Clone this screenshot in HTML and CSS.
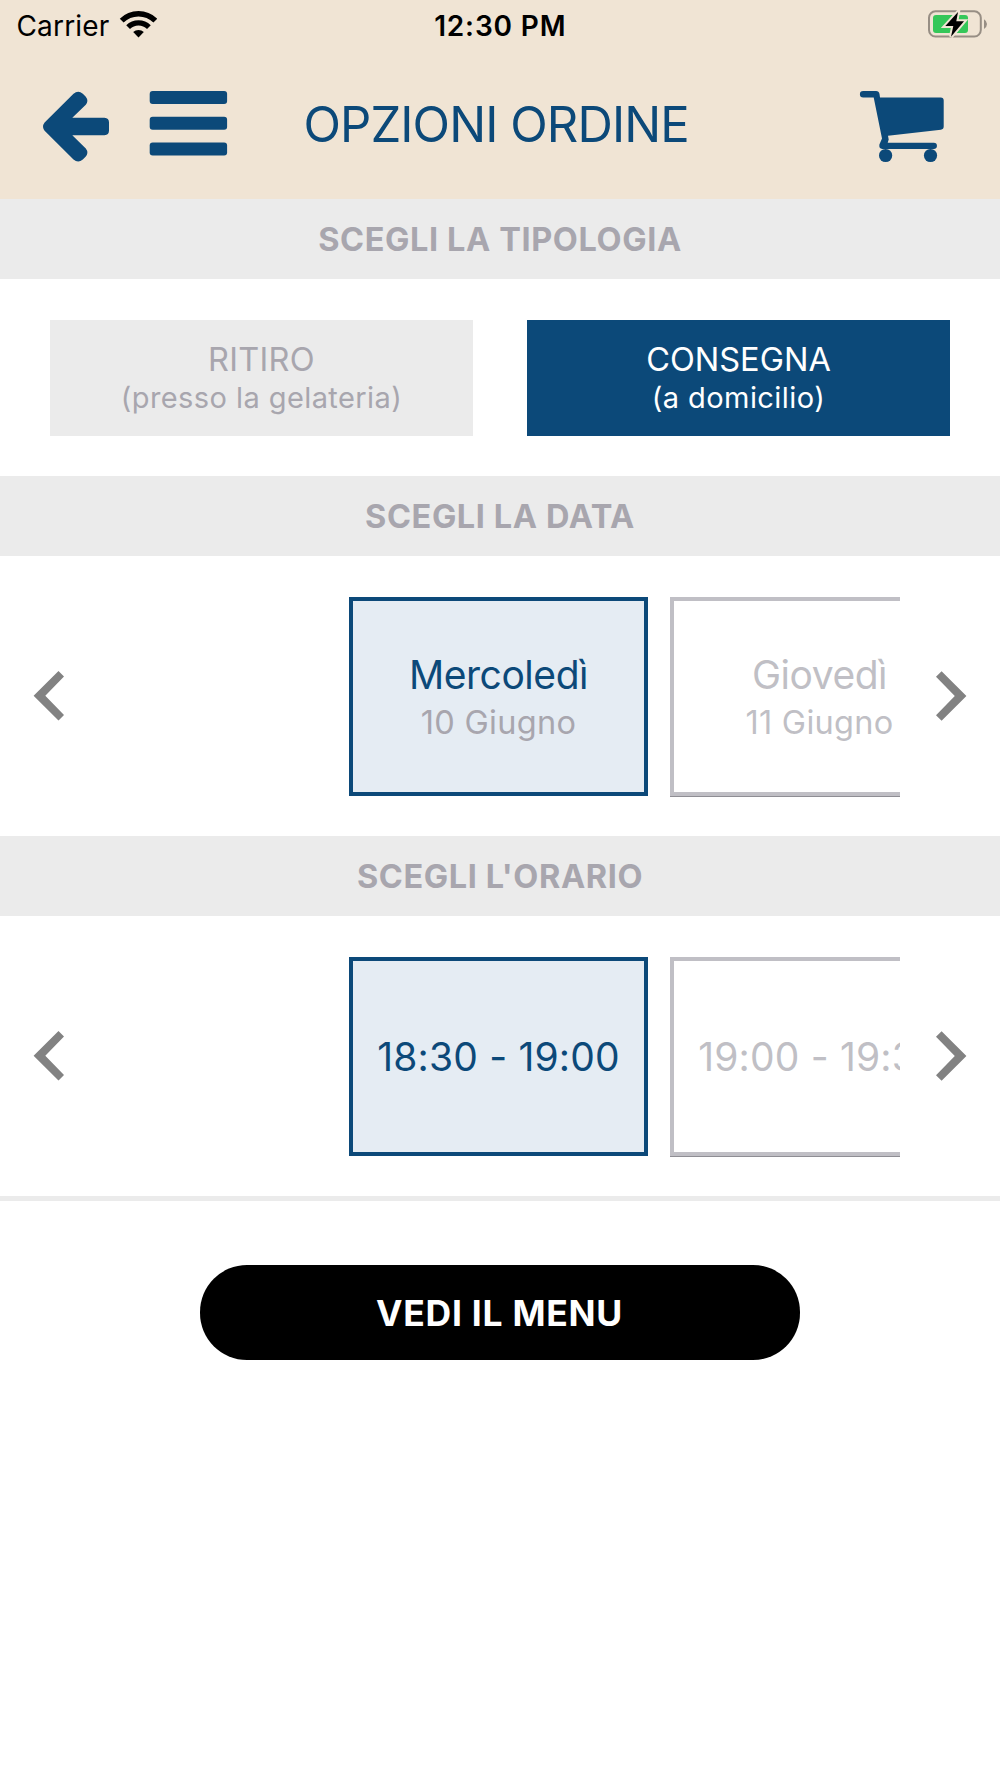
FILE: index.html
```
<!DOCTYPE html>
<html lang="it">
<head>
    <meta charset="UTF-8">
    <meta name="viewport" content="width=device-width, initial-scale=1.0">
    <title>Opzioni ordine</title>
    <link rel="stylesheet" href="styles.css">
</head>
<body>
    <header class="header">
        <div class="status-bar">
            <div class="carrier">
                <span>Carrier</span>
                <svg width="38" height="51" viewBox="119 -0.5 38 51">
                    <path d="M121.7 20.2a23.8 23.8 0 0 1 33.6 0" fill="none" stroke="#000" stroke-width="5.4"/>
                    <path d="M128.1 26.6a14.7 14.7 0 0 1 20.8 0" fill="none" stroke="#000" stroke-width="5.3"/>
                    <path d="M138.5 36.9l-5.3-5.3a7.8 7.8 0 0 1 10.6 0z"/>
                </svg>
            </div>
            <span class="clock">12:30 PM</span>
            <svg class="battery" width="62" height="51" viewBox="927 0 62 51">
                <rect x="929" y="11.3" width="51.8" height="25.2" rx="6.5" fill="none" stroke="#978e84" stroke-width="2"/>
                <rect x="933" y="15" width="35" height="18" rx="3" fill="#35c759"/>
                <path d="M984 19.3q3 1.8 3 4.8t-3 4.8z" fill="#978e84"/>
                <path d="M958 12l-12.7 14h8l-2.3 10.7L964 21.3h-7.7z" fill="#000" stroke="#f0e4d4" stroke-width="4" paint-order="stroke"/>
            </svg>
        </div>
        <nav class="nav">
            <svg class="icon" width="72" height="80" viewBox="40 84 72 80">
                <path d="M44.6 122.6L73.5 93.7Q78.2 89.8 82.8 93.7L85.8 96.7Q88.9 100.7 85.8 104.7L72.3 117.7H104.5Q109 118 109 122.5V130.5Q109 135 104.5 135.2H72.3L85.8 148.5Q88.9 152.5 85.8 156.5L82.8 159.5Q78.2 163.3 73.5 159.5L44.6 130.8Q41.5 126.7 44.6 122.6Z"/>
            </svg>
            <svg class="icon menu-icon" width="82" height="80" viewBox="148 84 82 80">
                <rect x="149.7" y="91" width="77.4" height="13" rx="3"/>
                <rect x="149.7" y="116.8" width="77.4" height="13" rx="3"/>
                <rect x="149.7" y="142.6" width="77.4" height="13" rx="3"/>
            </svg>
            <h1 class="title">OPZIONI ORDINE</h1>
            <svg class="icon cart-icon" width="92" height="80" viewBox="856 84 92 80">
                <path d="M863.2 91H876Q879 91 879.5 94L880 97.6H940.7Q943.7 97.6 943.7 100.6V126.5Q943.7 129.3 940.9 129.7L888 135.8L888.7 139.5L887.7 142.7H933.8A3.1 3.1 0 0 1 933.8 149H882.3Q878.7 148.5 879.4 144.5L882 138.5L873.7 97.6H863.2A3.2 3.2 0 0 1 863.2 91Z"/>
                <circle cx="885.6" cy="155.5" r="6.6"/>
                <circle cx="930.5" cy="155.5" r="6.6"/>
            </svg>
        </nav>
    </header>

    <main>
        <h2 class="section-title">SCEGLI LA TIPOLOGIA</h2>
        <div class="types">
            <div class="type">
                <span class="type-name">RITIRO</span>
                <span class="type-note">(presso la gelateria)</span>
            </div>
            <div class="type type-active">
                <span class="type-name consegna">CONSEGNA</span>
                <span class="type-note">(a domicilio)</span>
            </div>
        </div>

        <h2 class="section-title">SCEGLI LA DATA</h2>
        <div class="slider">
            <svg class="arrow" width="100" height="60" viewBox="0 0 100 60">
                <path d="M58.5 5L64 10.5L45.3 29.7L64 49L58.5 54.6L33.6 29.7Z"/>
            </svg>
            <div class="cards">
                <div class="card card-active">
                    <span class="day">Mercoledì</span>
                    <span class="date">10 Giugno</span>
                </div>
                <div class="card">
                    <span class="day">Giovedì</span>
                    <span class="date">11 Giugno</span>
                </div>
            </div>
            <svg class="arrow" width="100" height="60" viewBox="0 0 100 60">
                <path d="M41.6 5.2L36 10.8L54.8 30L36 49.2L41.6 54.8L66.4 30Z"/>
            </svg>
        </div>

        <h2 class="section-title">SCEGLI L'ORARIO</h2>
        <div class="slider">
            <svg class="arrow" width="100" height="60" viewBox="0 0 100 60">
                <path d="M58.5 5L64 10.5L45.3 29.7L64 49L58.5 54.6L33.6 29.7Z"/>
            </svg>
            <div class="cards">
                <div class="card card-active card-time">
                    <span class="time">18:30 - 19:00</span>
                </div>
                <div class="card card-time">
                    <span class="time">19:00 - 19:30</span>
                </div>
            </div>
            <svg class="arrow" width="100" height="60" viewBox="0 0 100 60">
                <path d="M41.6 5.2L36 10.8L54.8 30L36 49.2L41.6 54.8L66.4 30Z"/>
            </svg>
        </div>

        <div class="footer">
            <button type="button" class="menu-button">VEDI IL MENU</button>
        </div>
    </main>
</body>
</html>
```
FILE: styles.css
```
* {
    box-sizing: border-box;
}

body {
    font-family: Inter, "Liberation Sans", sans-serif;
    background-color: #fff;
    margin: 0;
}

h1, h2 {
    margin: 0;
}

/* Header */
.header {
    background-color: #f0e4d4;
    height: 199px;
}

.status-bar {
    display: grid;
    grid-template-columns: 1fr auto 1fr;
    height: 51px;
    padding: 0 11px 0 16.5px;
    font-size: 28px;
    line-height: 53px;
}

.carrier {
    display: flex;
    gap: 10px;
    letter-spacing: 0.16px;
}

.clock {
    font-weight: 600;
    letter-spacing: 0.85px;
    padding-right: 5px;
}

.battery {
    justify-self: end;
}

.nav {
    display: flex;
    padding: 33px 52px 0 40px;
}

.icon {
    fill: #0c4979;
    flex: none;
}

.menu-icon {
    margin-left: 36px;
}

.title {
    margin-left: 73.5px;
    color: #0c4979;
    font-size: 49px;
    font-weight: 400;
    letter-spacing: -0.91px;
    line-height: 82px;
    white-space: nowrap;
}

.cart-icon {
    margin-left: auto;
}

/* Sections */
.section-title {
    background-color: #ebebeb;
    color: #a8a6ae;
    font-size: 32.5px;
    font-weight: 700;
    letter-spacing: 0.6px;
    line-height: 81px;
    height: 80px;
    text-align: center;
}

.types {
    display: flex;
    gap: 54px;
    height: 197px;
    padding: 41px 50px 0;
}

.type {
    flex: 1;
    display: flex;
    flex-direction: column;
    justify-content: center;
    height: 116px;
    padding-top: 2px;
    background-color: #ebebeb;
    color: #a8a6ae;
    text-align: center;
    line-height: 38px;
}

.type-active {
    background-color: #0c4979;
    color: #fff;
}

.type-name {
    font-size: 32.5px;
    letter-spacing: 0.3px;
}

.consegna {
    letter-spacing: 0;
}

.type-note {
    font-size: 29px;
    letter-spacing: 0.42px;
}

/* Sliders */
.slider {
    display: flex;
    align-items: center;
    height: 280px;
}

.arrow {
    flex: none;
    fill: #828282;
}

.cards {
    display: flex;
    align-items: flex-start;
    gap: 22px;
    width: 800px;
    height: 200px;
    margin-top: 1px;
    padding-left: 249px;
    overflow: hidden;
}

.card {
    display: flex;
    flex: none;
    flex-direction: column;
    justify-content: center;
    width: 299px;
    height: 199px;
    padding-top: 6px;
    border: 4px solid #c0bfc5;
    box-shadow: 0 1px 0 #8f8e94;
    color: #c0bfc5;
    line-height: 48px;
    text-align: center;
}

.card-time {
    padding-top: 2px;
}

.card-active {
    background-color: #e5ecf3;
    border-color: #0c4979;
    box-shadow: none;
    color: #0c4979;
}

.day {
    font-size: 39px;
    letter-spacing: -0.45px;
}

.date {
    font-size: 32.5px;
    letter-spacing: 0.3px;
}

.card-active .date {
    color: #a8a6ae;
}

.time {
    font-size: 39px;
    letter-spacing: 0.17px;
}

/* Footer */
.footer {
    border-top: 5px solid #ebebeb;
    padding-top: 64px;
    text-align: center;
}

.menu-button {
    width: 600px;
    height: 95px;
    padding: 1px 1px 0 0;
    border: none;
    border-radius: 47px;
    background-color: #000;
    color: #fff;
    font-family: inherit;
    font-size: 35.5px;
    font-weight: 700;
    letter-spacing: 0.73px;
    cursor: pointer;
}
```
